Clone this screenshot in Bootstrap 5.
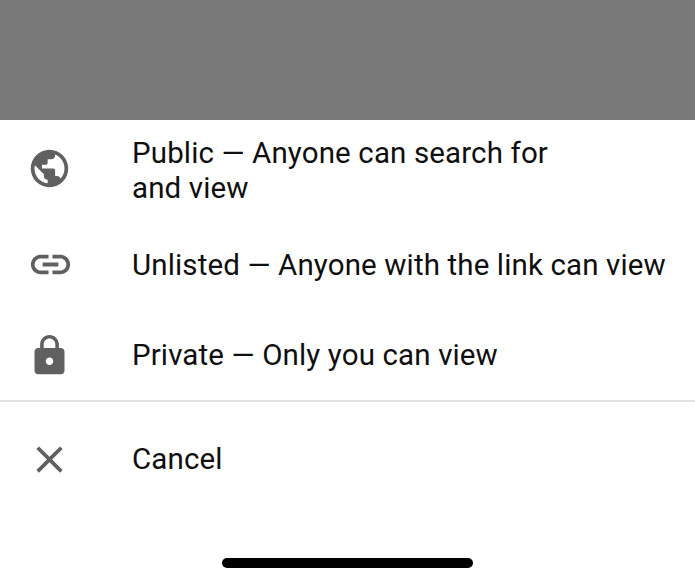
<!DOCTYPE html>
<html lang="en">
<head>
<meta charset="utf-8">
<meta name="viewport" content="width=device-width, initial-scale=1">
<title>Visibility</title>
<link href="https://cdn.jsdelivr.net/npm/bootstrap@5.3.0/dist/css/bootstrap.min.css" rel="stylesheet">
<style>
body { font-family: Roboto, sans-serif; font-size: 29.5px; line-height: 35px; color: #0f0f0f; background: #fff; }
.scrim { height: 120px; background: #797979; }
.option { color: #0f0f0f; padding-left: 27px; letter-spacing: .13px; }
.option svg { width: 45px; height: 45px; margin-right: 60px; fill: #606060; }
.option .link-icon { width: 47px; height: 47px; margin-right: 58px; margin-bottom: 1px; }
.opt-public { height: 100px; padding-top: 2px; }
.opt-public svg { margin-bottom: 5px; }
.opt-unlisted { height: 90px; }
.opt-private { height: 90px; }
.opt-cancel { height: 115px; }
.divider { height: 2px; background: #e2e2e2; }
.home-bar { width: 251px; height: 10px; margin-bottom: 10px; background: #000; }
</style>
</head>
<body class="vh-100 overflow-hidden d-flex flex-column">
<div class="scrim flex-shrink-0"></div>
<main class="d-flex flex-column">
  <a class="option opt-public d-flex align-items-center text-decoration-none" href="#">
    <svg class="flex-shrink-0" viewBox="0 0 24 24"><path d="M12 2C6.480 2 2 6.480 2 12s4.480 10 10 10 10-4.480 10-10S17.520 2 12 2zm-1 17.930c-3.950-.49-7-3.850-7-7.930 0-.62.080-1.210.21-1.790L9 15v1c0 1.100.9 2 2 2v1.930zm6.900-2.540c-.26-.81-1-1.390-1.900-1.390h-1v-3c0-.55-.45-1-1-1H8v-2h2c.55 0 1-.45 1-1V7h2c1.100 0 2-.9 2-2v-.41c2.930 1.190 5 4.060 5 7.410 0 2.080-.8 3.970-2.100 5.390z"/></svg>
    <span>Public — Anyone can search for<br>and view</span>
  </a>
  <a class="option opt-unlisted d-flex align-items-center text-decoration-none" href="#">
    <svg class="link-icon flex-shrink-0" viewBox="0 0 24 24"><path d="M3.900 12c0-1.710 1.390-3.100 3.100-3.100h4V7H7c-2.760 0-5 2.240-5 5s2.240 5 5 5h4v-1.900H7c-1.710 0-3.100-1.390-3.100-3.100zM8 13h8v-2H8v2zm9-6h-4v1.900h4c1.710 0 3.100 1.390 3.100 3.100s-1.390 3.100-3.100 3.100h-4V17h4c2.760 0 5-2.240 5-5s-2.240-5-5-5z"/></svg>
    <span class="text-nowrap">Unlisted — Anyone with the link can view</span>
  </a>
  <a class="option opt-private d-flex align-items-center text-decoration-none" href="#">
    <svg class="flex-shrink-0" viewBox="0 0 24 24"><path d="M18 8h-1V6c0-2.760-2.240-5-5-5S7 3.240 7 6v2H6c-1.100 0-2 .9-2 2v10c0 1.100.9 2 2 2h12c1.100 0 2-.9 2-2V10c0-1.100-.9-2-2-2zm-6 9c-1.100 0-2-.9-2-2s.9-2 2-2 2 .9 2 2-.9 2-2 2zm3.100-9H8.900V6c0-1.710 1.390-3.100 3.100-3.100s3.100 1.390 3.100 3.100v2z"/></svg>
    <span>Private — Only you can view</span>
  </a>
  <div class="divider"></div>
  <a class="option opt-cancel d-flex align-items-center text-decoration-none" href="#">
    <svg class="flex-shrink-0" viewBox="0 0 24 24"><path d="M19 6.410 17.590 5 12 10.590 6.410 5 5 6.410 10.590 12 5 17.590 6.410 19 12 13.410 17.590 19 19 17.590 13.410 12z"/></svg>
    <span>Cancel</span>
  </a>
</main>
<div class="home-bar rounded-pill mx-auto mt-auto flex-shrink-0"></div>
</body>
</html>
